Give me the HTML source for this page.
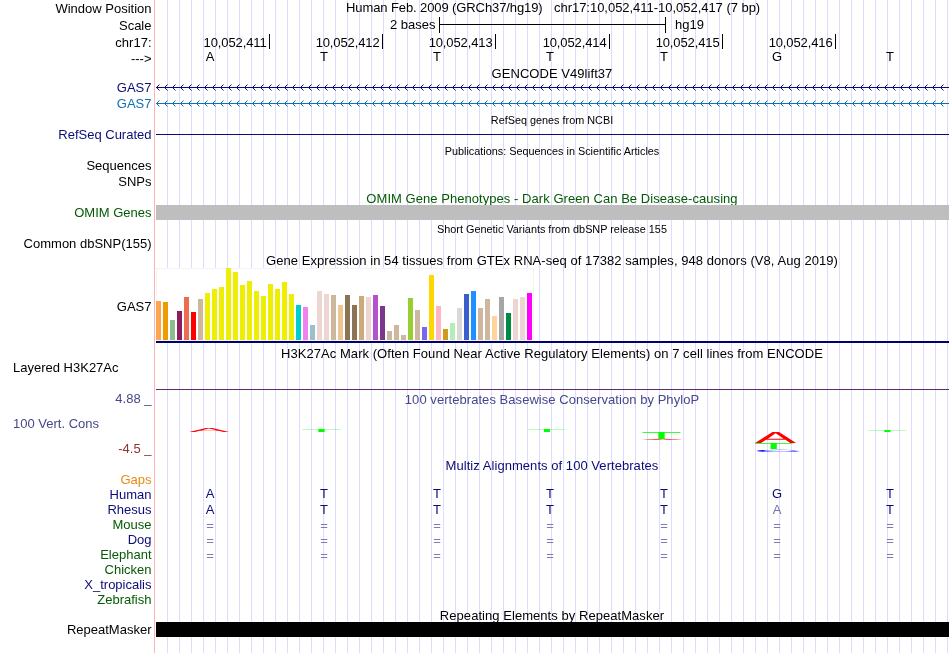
<!DOCTYPE html>
<html><head><meta charset="utf-8"><title>UCSC Genome Browser - chr17:10,052,411-10,052,417</title>
<style>
html,body{margin:0;padding:0;background:#fff}
body{width:950px;height:653px;position:relative;overflow:hidden;font-family:"Liberation Sans",sans-serif;font-size:13px;line-height:15px;color:#000;
background-image:repeating-linear-gradient(90deg,#dcdcff 0,#dcdcff 1px,transparent 1px,transparent 12px);background-position:167px 0;background-size:12px 100%}
.cover{position:absolute;left:0;top:0;width:156px;height:653px;background:#fff}
.sep{position:absolute;left:154px;top:0;width:1px;height:653px;background:#ffb4b4}
#w{position:absolute;left:0;top:0;width:950px;height:653px;will-change:transform}
.l,.t,.c,.b,.r,.g{position:absolute;white-space:nowrap;height:15px}
.l{left:0;width:151.5px;text-align:right}
.c{left:155px;width:794px;text-align:center;letter-spacing:0.05px}
.b{width:20px;text-align:center}
.r{height:auto}
.g{left:0;top:0;text-rendering:geometricPrecision;display:block;font-size:20px;line-height:20px;height:20px;transform-origin:0 0}
</style></head><body>
<div id="w"><div class="cover"></div><div class="sep"></div>
<div class="l" style="top:1px;color:#000">Window Position</div>
<div class="l" style="top:18px;color:#000">Scale</div>
<div class="l" style="top:35px;color:#000">chr17:</div>
<div class="l" style="top:51px;color:#000">---&gt;</div>
<div class="l" style="top:80px;color:#0c0c78">GAS7</div>
<div class="l" style="top:96px;color:#0f70b0">GAS7</div>
<div class="l" style="top:127px;color:#0c0c78">RefSeq Curated</div>
<div class="l" style="top:158px;color:#000">Sequences</div>
<div class="l" style="top:174px;color:#000">SNPs</div>
<div class="l" style="top:205px;color:#045a04">OMIM Genes</div>
<div class="l" style="top:236px;color:#000">Common dbSNP(155)</div>
<div class="l" style="top:299px;color:#000">GAS7</div>
<div class="l" style="top:472px;color:#e68c14">Gaps</div>
<div class="l" style="top:487px;color:#0c0c78">Human</div>
<div class="l" style="top:502px;color:#0c0c78">Rhesus</div>
<div class="l" style="top:517px;color:#045a04">Mouse</div>
<div class="l" style="top:532px;color:#0c0c78">Dog</div>
<div class="l" style="top:547px;color:#045a04">Elephant</div>
<div class="l" style="top:562px;color:#045a04">Chicken</div>
<div class="l" style="top:577px;color:#0c0c78">X_tropicalis</div>
<div class="l" style="top:592px;color:#045a04">Zebrafish</div>
<div class="l" style="top:622px;color:#000">RepeatMasker</div>
<div class="t" style="left:13px;top:360px">Layered H3K27Ac</div>
<div class="t" style="left:13px;top:416px;color:#46468c">100 Vert. Cons</div>
<div class="l" style="top:391px;color:#46468c">4.88 _</div>
<div class="l" style="top:441px;color:#8c3232">-4.5 _</div>
<div class="c" style="top:66px;color:#000;font-size:13px">GENCODE V49lift37</div>
<div class="c" style="top:113px;color:#000;font-size:10.85px;letter-spacing:0">RefSeq genes from NCBI</div>
<div class="c" style="top:144px;color:#000;font-size:10.85px;letter-spacing:0">Publications: Sequences in Scientific Articles</div>
<div class="c" style="top:191px;color:#045a04;font-size:13px">OMIM Gene Phenotypes - Dark Green Can Be Disease-causing</div>
<div class="c" style="top:222px;color:#000;font-size:10.85px;letter-spacing:0">Short Genetic Variants from dbSNP release 155</div>
<div class="c" style="top:253px;color:#000;font-size:13px">Gene Expression in 54 tissues from GTEx RNA-seq of 17382 samples, 948 donors (V8, Aug 2019)</div>
<div class="c" style="top:346px;color:#000;font-size:13px">H3K27Ac Mark (Often Found Near Active Regulatory Elements) on 7 cell lines from ENCODE</div>
<div class="c" style="top:392px;color:#46468c;font-size:13px">100 vertebrates Basewise Conservation by PhyloP</div>
<div class="c" style="top:458px;color:#0c0c78;font-size:13px">Multiz Alignments of 100 Vertebrates</div>
<div class="c" style="top:608px;color:#000;font-size:13px">Repeating Elements by RepeatMasker</div>
<div class="t" style="left:346px;top:0px;letter-spacing:-0.1px">Human Feb. 2009 (GRCh37/hg19)</div>
<div class="t" style="left:554px;top:0px;letter-spacing:-0.03px">chr17:10,052,411-10,052,417 (7 bp)</div>
<div class="t" style="left:390px;top:17px">2 bases</div>
<div class="t" style="left:675px;top:17px">hg19</div>
<div class="r" style="left:439px;top:24px;width:227px;height:1px;background:#000"></div>
<div class="r" style="left:439px;top:17px;width:1px;height:16px;background:#000"></div>
<div class="r" style="left:665px;top:17px;width:1px;height:16px;background:#000"></div>
<div class="r" style="left:269px;top:34px;width:1px;height:15px;background:#000"></div>
<div class="t" style="left:202.5px;width:64px;text-align:right;top:35px;letter-spacing:-0.12px">10,052,411</div>
<div class="r" style="left:382px;top:34px;width:1px;height:15px;background:#000"></div>
<div class="t" style="left:315.5px;width:64px;text-align:right;top:35px;letter-spacing:-0.12px">10,052,412</div>
<div class="r" style="left:495px;top:34px;width:1px;height:15px;background:#000"></div>
<div class="t" style="left:428.5px;width:64px;text-align:right;top:35px;letter-spacing:-0.12px">10,052,413</div>
<div class="r" style="left:609px;top:34px;width:1px;height:15px;background:#000"></div>
<div class="t" style="left:542.5px;width:64px;text-align:right;top:35px;letter-spacing:-0.12px">10,052,414</div>
<div class="r" style="left:722px;top:34px;width:1px;height:15px;background:#000"></div>
<div class="t" style="left:655.5px;width:64px;text-align:right;top:35px;letter-spacing:-0.12px">10,052,415</div>
<div class="r" style="left:835px;top:34px;width:1px;height:15px;background:#000"></div>
<div class="t" style="left:768.5px;width:64px;text-align:right;top:35px;letter-spacing:-0.12px">10,052,416</div>
<div class="b" style="left:200px;top:49px">A</div>
<div class="b" style="left:314px;top:49px">T</div>
<div class="b" style="left:427px;top:49px">T</div>
<div class="b" style="left:540px;top:49px">T</div>
<div class="b" style="left:654px;top:49px">T</div>
<div class="b" style="left:767px;top:49px">G</div>
<div class="b" style="left:880px;top:49px">T</div>
<div class="b" style="left:200px;top:486px;color:#0c0c78">A</div>
<div class="b" style="left:314px;top:486px;color:#0c0c78">T</div>
<div class="b" style="left:427px;top:486px;color:#0c0c78">T</div>
<div class="b" style="left:540px;top:486px;color:#0c0c78">T</div>
<div class="b" style="left:654px;top:486px;color:#0c0c78">T</div>
<div class="b" style="left:767px;top:486px;color:#0c0c78">G</div>
<div class="b" style="left:880px;top:486px;color:#0c0c78">T</div>
<div class="b" style="left:200px;top:502px;color:#0c0c78">A</div>
<div class="b" style="left:314px;top:502px;color:#0c0c78">T</div>
<div class="b" style="left:427px;top:502px;color:#0c0c78">T</div>
<div class="b" style="left:540px;top:502px;color:#0c0c78">T</div>
<div class="b" style="left:654px;top:502px;color:#0c0c78">T</div>
<div class="b" style="left:767px;top:502px;color:#7474ac">A</div>
<div class="b" style="left:880px;top:502px;color:#0c0c78">T</div>
<div class="b" style="left:200px;top:518px;color:#7c7cb4">=</div>
<div class="b" style="left:314px;top:518px;color:#7c7cb4">=</div>
<div class="b" style="left:427px;top:518px;color:#7c7cb4">=</div>
<div class="b" style="left:540px;top:518px;color:#7c7cb4">=</div>
<div class="b" style="left:654px;top:518px;color:#7c7cb4">=</div>
<div class="b" style="left:767px;top:518px;color:#7c7cb4">=</div>
<div class="b" style="left:880px;top:518px;color:#7c7cb4">=</div>
<div class="b" style="left:200px;top:533px;color:#7c7cb4">=</div>
<div class="b" style="left:314px;top:533px;color:#7c7cb4">=</div>
<div class="b" style="left:427px;top:533px;color:#7c7cb4">=</div>
<div class="b" style="left:540px;top:533px;color:#7c7cb4">=</div>
<div class="b" style="left:654px;top:533px;color:#7c7cb4">=</div>
<div class="b" style="left:767px;top:533px;color:#7c7cb4">=</div>
<div class="b" style="left:880px;top:533px;color:#7c7cb4">=</div>
<div class="b" style="left:200px;top:548px;color:#7c7cb4">=</div>
<div class="b" style="left:314px;top:548px;color:#7c7cb4">=</div>
<div class="b" style="left:427px;top:548px;color:#7c7cb4">=</div>
<div class="b" style="left:540px;top:548px;color:#7c7cb4">=</div>
<div class="b" style="left:654px;top:548px;color:#7c7cb4">=</div>
<div class="b" style="left:767px;top:548px;color:#7c7cb4">=</div>
<div class="b" style="left:880px;top:548px;color:#7c7cb4">=</div>
<svg class="r" style="left:156px;top:83px" width="794" height="9" viewBox="0 0 794 9"><path d="M0 4.5H793" stroke="#0c0c78" stroke-width="1" fill="none"/><path d="M3.5 1.5L0.5 4.5L3.5 7.5M11.5 1.5L8.5 4.5L11.5 7.5M19.5 1.5L16.5 4.5L19.5 7.5M27.5 1.5L24.5 4.5L27.5 7.5M35.5 1.5L32.5 4.5L35.5 7.5M43.5 1.5L40.5 4.5L43.5 7.5M51.5 1.5L48.5 4.5L51.5 7.5M59.5 1.5L56.5 4.5L59.5 7.5M67.5 1.5L64.5 4.5L67.5 7.5M75.5 1.5L72.5 4.5L75.5 7.5M83.5 1.5L80.5 4.5L83.5 7.5M91.5 1.5L88.5 4.5L91.5 7.5M99.5 1.5L96.5 4.5L99.5 7.5M107.5 1.5L104.5 4.5L107.5 7.5M115.5 1.5L112.5 4.5L115.5 7.5M123.5 1.5L120.5 4.5L123.5 7.5M131.5 1.5L128.5 4.5L131.5 7.5M139.5 1.5L136.5 4.5L139.5 7.5M147.5 1.5L144.5 4.5L147.5 7.5M155.5 1.5L152.5 4.5L155.5 7.5M163.5 1.5L160.5 4.5L163.5 7.5M171.5 1.5L168.5 4.5L171.5 7.5M179.5 1.5L176.5 4.5L179.5 7.5M187.5 1.5L184.5 4.5L187.5 7.5M195.5 1.5L192.5 4.5L195.5 7.5M203.5 1.5L200.5 4.5L203.5 7.5M211.5 1.5L208.5 4.5L211.5 7.5M219.5 1.5L216.5 4.5L219.5 7.5M227.5 1.5L224.5 4.5L227.5 7.5M235.5 1.5L232.5 4.5L235.5 7.5M243.5 1.5L240.5 4.5L243.5 7.5M251.5 1.5L248.5 4.5L251.5 7.5M259.5 1.5L256.5 4.5L259.5 7.5M267.5 1.5L264.5 4.5L267.5 7.5M275.5 1.5L272.5 4.5L275.5 7.5M283.5 1.5L280.5 4.5L283.5 7.5M291.5 1.5L288.5 4.5L291.5 7.5M299.5 1.5L296.5 4.5L299.5 7.5M307.5 1.5L304.5 4.5L307.5 7.5M315.5 1.5L312.5 4.5L315.5 7.5M323.5 1.5L320.5 4.5L323.5 7.5M331.5 1.5L328.5 4.5L331.5 7.5M339.5 1.5L336.5 4.5L339.5 7.5M347.5 1.5L344.5 4.5L347.5 7.5M355.5 1.5L352.5 4.5L355.5 7.5M363.5 1.5L360.5 4.5L363.5 7.5M371.5 1.5L368.5 4.5L371.5 7.5M379.5 1.5L376.5 4.5L379.5 7.5M387.5 1.5L384.5 4.5L387.5 7.5M395.5 1.5L392.5 4.5L395.5 7.5M403.5 1.5L400.5 4.5L403.5 7.5M411.5 1.5L408.5 4.5L411.5 7.5M419.5 1.5L416.5 4.5L419.5 7.5M427.5 1.5L424.5 4.5L427.5 7.5M435.5 1.5L432.5 4.5L435.5 7.5M443.5 1.5L440.5 4.5L443.5 7.5M451.5 1.5L448.5 4.5L451.5 7.5M459.5 1.5L456.5 4.5L459.5 7.5M467.5 1.5L464.5 4.5L467.5 7.5M475.5 1.5L472.5 4.5L475.5 7.5M483.5 1.5L480.5 4.5L483.5 7.5M491.5 1.5L488.5 4.5L491.5 7.5M499.5 1.5L496.5 4.5L499.5 7.5M507.5 1.5L504.5 4.5L507.5 7.5M515.5 1.5L512.5 4.5L515.5 7.5M523.5 1.5L520.5 4.5L523.5 7.5M531.5 1.5L528.5 4.5L531.5 7.5M539.5 1.5L536.5 4.5L539.5 7.5M547.5 1.5L544.5 4.5L547.5 7.5M555.5 1.5L552.5 4.5L555.5 7.5M563.5 1.5L560.5 4.5L563.5 7.5M571.5 1.5L568.5 4.5L571.5 7.5M579.5 1.5L576.5 4.5L579.5 7.5M587.5 1.5L584.5 4.5L587.5 7.5M595.5 1.5L592.5 4.5L595.5 7.5M603.5 1.5L600.5 4.5L603.5 7.5M611.5 1.5L608.5 4.5L611.5 7.5M619.5 1.5L616.5 4.5L619.5 7.5M627.5 1.5L624.5 4.5L627.5 7.5M635.5 1.5L632.5 4.5L635.5 7.5M643.5 1.5L640.5 4.5L643.5 7.5M651.5 1.5L648.5 4.5L651.5 7.5M659.5 1.5L656.5 4.5L659.5 7.5M667.5 1.5L664.5 4.5L667.5 7.5M675.5 1.5L672.5 4.5L675.5 7.5M683.5 1.5L680.5 4.5L683.5 7.5M691.5 1.5L688.5 4.5L691.5 7.5M699.5 1.5L696.5 4.5L699.5 7.5M707.5 1.5L704.5 4.5L707.5 7.5M715.5 1.5L712.5 4.5L715.5 7.5M723.5 1.5L720.5 4.5L723.5 7.5M731.5 1.5L728.5 4.5L731.5 7.5M739.5 1.5L736.5 4.5L739.5 7.5M747.5 1.5L744.5 4.5L747.5 7.5M755.5 1.5L752.5 4.5L755.5 7.5M763.5 1.5L760.5 4.5L763.5 7.5M771.5 1.5L768.5 4.5L771.5 7.5M779.5 1.5L776.5 4.5L779.5 7.5M787.5 1.5L784.5 4.5L787.5 7.5" stroke="#0c0c78" stroke-width="1" fill="none"/></svg>
<svg class="r" style="left:156px;top:99px" width="794" height="9" viewBox="0 0 794 9"><path d="M0 4.5H793" stroke="#0f70b0" stroke-width="1" fill="none"/><path d="M3.5 1.5L0.5 4.5L3.5 7.5M11.5 1.5L8.5 4.5L11.5 7.5M19.5 1.5L16.5 4.5L19.5 7.5M27.5 1.5L24.5 4.5L27.5 7.5M35.5 1.5L32.5 4.5L35.5 7.5M43.5 1.5L40.5 4.5L43.5 7.5M51.5 1.5L48.5 4.5L51.5 7.5M59.5 1.5L56.5 4.5L59.5 7.5M67.5 1.5L64.5 4.5L67.5 7.5M75.5 1.5L72.5 4.5L75.5 7.5M83.5 1.5L80.5 4.5L83.5 7.5M91.5 1.5L88.5 4.5L91.5 7.5M99.5 1.5L96.5 4.5L99.5 7.5M107.5 1.5L104.5 4.5L107.5 7.5M115.5 1.5L112.5 4.5L115.5 7.5M123.5 1.5L120.5 4.5L123.5 7.5M131.5 1.5L128.5 4.5L131.5 7.5M139.5 1.5L136.5 4.5L139.5 7.5M147.5 1.5L144.5 4.5L147.5 7.5M155.5 1.5L152.5 4.5L155.5 7.5M163.5 1.5L160.5 4.5L163.5 7.5M171.5 1.5L168.5 4.5L171.5 7.5M179.5 1.5L176.5 4.5L179.5 7.5M187.5 1.5L184.5 4.5L187.5 7.5M195.5 1.5L192.5 4.5L195.5 7.5M203.5 1.5L200.5 4.5L203.5 7.5M211.5 1.5L208.5 4.5L211.5 7.5M219.5 1.5L216.5 4.5L219.5 7.5M227.5 1.5L224.5 4.5L227.5 7.5M235.5 1.5L232.5 4.5L235.5 7.5M243.5 1.5L240.5 4.5L243.5 7.5M251.5 1.5L248.5 4.5L251.5 7.5M259.5 1.5L256.5 4.5L259.5 7.5M267.5 1.5L264.5 4.5L267.5 7.5M275.5 1.5L272.5 4.5L275.5 7.5M283.5 1.5L280.5 4.5L283.5 7.5M291.5 1.5L288.5 4.5L291.5 7.5M299.5 1.5L296.5 4.5L299.5 7.5M307.5 1.5L304.5 4.5L307.5 7.5M315.5 1.5L312.5 4.5L315.5 7.5M323.5 1.5L320.5 4.5L323.5 7.5M331.5 1.5L328.5 4.5L331.5 7.5M339.5 1.5L336.5 4.5L339.5 7.5M347.5 1.5L344.5 4.5L347.5 7.5M355.5 1.5L352.5 4.5L355.5 7.5M363.5 1.5L360.5 4.5L363.5 7.5M371.5 1.5L368.5 4.5L371.5 7.5M379.5 1.5L376.5 4.5L379.5 7.5M387.5 1.5L384.5 4.5L387.5 7.5M395.5 1.5L392.5 4.5L395.5 7.5M403.5 1.5L400.5 4.5L403.5 7.5M411.5 1.5L408.5 4.5L411.5 7.5M419.5 1.5L416.5 4.5L419.5 7.5M427.5 1.5L424.5 4.5L427.5 7.5M435.5 1.5L432.5 4.5L435.5 7.5M443.5 1.5L440.5 4.5L443.5 7.5M451.5 1.5L448.5 4.5L451.5 7.5M459.5 1.5L456.5 4.5L459.5 7.5M467.5 1.5L464.5 4.5L467.5 7.5M475.5 1.5L472.5 4.5L475.5 7.5M483.5 1.5L480.5 4.5L483.5 7.5M491.5 1.5L488.5 4.5L491.5 7.5M499.5 1.5L496.5 4.5L499.5 7.5M507.5 1.5L504.5 4.5L507.5 7.5M515.5 1.5L512.5 4.5L515.5 7.5M523.5 1.5L520.5 4.5L523.5 7.5M531.5 1.5L528.5 4.5L531.5 7.5M539.5 1.5L536.5 4.5L539.5 7.5M547.5 1.5L544.5 4.5L547.5 7.5M555.5 1.5L552.5 4.5L555.5 7.5M563.5 1.5L560.5 4.5L563.5 7.5M571.5 1.5L568.5 4.5L571.5 7.5M579.5 1.5L576.5 4.5L579.5 7.5M587.5 1.5L584.5 4.5L587.5 7.5M595.5 1.5L592.5 4.5L595.5 7.5M603.5 1.5L600.5 4.5L603.5 7.5M611.5 1.5L608.5 4.5L611.5 7.5M619.5 1.5L616.5 4.5L619.5 7.5M627.5 1.5L624.5 4.5L627.5 7.5M635.5 1.5L632.5 4.5L635.5 7.5M643.5 1.5L640.5 4.5L643.5 7.5M651.5 1.5L648.5 4.5L651.5 7.5M659.5 1.5L656.5 4.5L659.5 7.5M667.5 1.5L664.5 4.5L667.5 7.5M675.5 1.5L672.5 4.5L675.5 7.5M683.5 1.5L680.5 4.5L683.5 7.5M691.5 1.5L688.5 4.5L691.5 7.5M699.5 1.5L696.5 4.5L699.5 7.5M707.5 1.5L704.5 4.5L707.5 7.5M715.5 1.5L712.5 4.5L715.5 7.5M723.5 1.5L720.5 4.5L723.5 7.5M731.5 1.5L728.5 4.5L731.5 7.5M739.5 1.5L736.5 4.5L739.5 7.5M747.5 1.5L744.5 4.5L747.5 7.5M755.5 1.5L752.5 4.5L755.5 7.5M763.5 1.5L760.5 4.5L763.5 7.5M771.5 1.5L768.5 4.5L771.5 7.5M779.5 1.5L776.5 4.5L779.5 7.5M787.5 1.5L784.5 4.5L787.5 7.5" stroke="#0f70b0" stroke-width="1" fill="none"/></svg>
<div class="r" style="left:156px;top:134px;width:793px;height:1px;background:#0c0c78"></div>
<div class="r" style="left:156px;top:205px;width:793px;height:15px;background:#bebebe"></div>
<div class="r" style="left:156px;top:268px;width:378px;height:73px;background:#fff;border:1px solid #f3f3f3;box-sizing:border-box"></div>
<div class="r" style="left:156px;top:301px;width:5px;height:39px;background:#FFA54F"></div>
<div class="r" style="left:163px;top:302px;width:5px;height:38px;background:#EE9A00"></div>
<div class="r" style="left:170px;top:320px;width:5px;height:20px;background:#8FBC8F"></div>
<div class="r" style="left:177px;top:311px;width:5px;height:29px;background:#8B1C62"></div>
<div class="r" style="left:184px;top:297px;width:5px;height:43px;background:#EE6A50"></div>
<div class="r" style="left:191px;top:312px;width:5px;height:28px;background:#FF0000"></div>
<div class="r" style="left:198px;top:299px;width:5px;height:41px;background:#CDB79E"></div>
<div class="r" style="left:205px;top:293px;width:5px;height:47px;background:#EEEE00"></div>
<div class="r" style="left:212px;top:289px;width:5px;height:51px;background:#EEEE00"></div>
<div class="r" style="left:219px;top:287px;width:5px;height:53px;background:#EEEE00"></div>
<div class="r" style="left:226px;top:268px;width:5px;height:72px;background:#EEEE00"></div>
<div class="r" style="left:233px;top:272px;width:5px;height:68px;background:#EEEE00"></div>
<div class="r" style="left:240px;top:285px;width:5px;height:55px;background:#EEEE00"></div>
<div class="r" style="left:247px;top:281px;width:5px;height:59px;background:#EEEE00"></div>
<div class="r" style="left:254px;top:291px;width:5px;height:49px;background:#EEEE00"></div>
<div class="r" style="left:261px;top:296px;width:5px;height:44px;background:#EEEE00"></div>
<div class="r" style="left:268px;top:284px;width:5px;height:56px;background:#EEEE00"></div>
<div class="r" style="left:275px;top:289px;width:5px;height:51px;background:#EEEE00"></div>
<div class="r" style="left:282px;top:282px;width:5px;height:58px;background:#EEEE00"></div>
<div class="r" style="left:289px;top:294px;width:5px;height:46px;background:#EEEE00"></div>
<div class="r" style="left:296px;top:305px;width:5px;height:35px;background:#00CDCD"></div>
<div class="r" style="left:303px;top:307px;width:5px;height:33px;background:#EE82EE"></div>
<div class="r" style="left:310px;top:325px;width:5px;height:15px;background:#9AC0CD"></div>
<div class="r" style="left:317px;top:291px;width:5px;height:49px;background:#EED5D2"></div>
<div class="r" style="left:324px;top:294px;width:5px;height:46px;background:#EED5D2"></div>
<div class="r" style="left:331px;top:295px;width:5px;height:45px;background:#CDB79E"></div>
<div class="r" style="left:338px;top:305px;width:5px;height:35px;background:#EEC591"></div>
<div class="r" style="left:345px;top:295px;width:5px;height:45px;background:#8B7355"></div>
<div class="r" style="left:352px;top:305px;width:5px;height:35px;background:#8B7355"></div>
<div class="r" style="left:359px;top:296px;width:5px;height:44px;background:#CDAA7D"></div>
<div class="r" style="left:366px;top:297px;width:5px;height:43px;background:#EED5D2"></div>
<div class="r" style="left:373px;top:295px;width:5px;height:45px;background:#B452CD"></div>
<div class="r" style="left:380px;top:306px;width:5px;height:34px;background:#7A378B"></div>
<div class="r" style="left:387px;top:331px;width:5px;height:9px;background:#CDB79E"></div>
<div class="r" style="left:394px;top:325px;width:5px;height:15px;background:#CDB79E"></div>
<div class="r" style="left:401px;top:335px;width:5px;height:5px;background:#CDB79E"></div>
<div class="r" style="left:408px;top:298px;width:5px;height:42px;background:#9ACD32"></div>
<div class="r" style="left:415px;top:310px;width:5px;height:30px;background:#CDB79E"></div>
<div class="r" style="left:422px;top:327px;width:5px;height:13px;background:#7A67EE"></div>
<div class="r" style="left:429px;top:275px;width:5px;height:65px;background:#FFD700"></div>
<div class="r" style="left:436px;top:306px;width:5px;height:34px;background:#FFB6C1"></div>
<div class="r" style="left:443px;top:329px;width:5px;height:11px;background:#CD9B1D"></div>
<div class="r" style="left:450px;top:323px;width:5px;height:17px;background:#B4EEB4"></div>
<div class="r" style="left:457px;top:308px;width:5px;height:32px;background:#D9D9D9"></div>
<div class="r" style="left:464px;top:294px;width:5px;height:46px;background:#3A5FCD"></div>
<div class="r" style="left:471px;top:291px;width:5px;height:49px;background:#1E90FF"></div>
<div class="r" style="left:478px;top:308px;width:5px;height:32px;background:#CDB79E"></div>
<div class="r" style="left:485px;top:299px;width:5px;height:41px;background:#CDB79E"></div>
<div class="r" style="left:492px;top:316px;width:5px;height:24px;background:#FFD39B"></div>
<div class="r" style="left:499px;top:297px;width:5px;height:43px;background:#A6A6A6"></div>
<div class="r" style="left:506px;top:313px;width:5px;height:27px;background:#008B45"></div>
<div class="r" style="left:513px;top:299px;width:5px;height:41px;background:#EED5D2"></div>
<div class="r" style="left:520px;top:297px;width:5px;height:43px;background:#EED5D2"></div>
<div class="r" style="left:527px;top:293px;width:5px;height:47px;background:#FF00FF"></div>
<div class="r" style="left:156px;top:341px;width:793px;height:2px;background:#00006e"></div>
<div class="r" style="left:156px;top:389px;width:793px;height:1px;background:#5a2d64"></div>
<div class="r" style="left:156px;top:622px;width:793px;height:15px;background:#000"></div>
<span class="g" style="color:#ff0000;transform:matrix(3.0162,0,0,0.2907,188.88,427.37)">A</span>
<span class="g" style="color:#00ff00;transform:matrix(3.3603,0,0,0.2180,300.99,428.53)">T</span>
<span class="g" style="color:#00ff00;transform:matrix(3.2718,0,0,0.2180,527.03,428.53)">T</span>
<span class="g" style="color:#ff0000;transform:matrix(3.0464,0,0,0.0872,641.88,438.82)">A</span>
<span class="g" style="color:#00ff00;transform:matrix(3.3603,0,0,0.5087,640.89,430.88)">T</span>
<span class="g" style="color:#ff0000;transform:matrix(3.0916,0,0,0.7994,754.88,430.23)">A</span>
<span class="g" style="color:#00ff00;transform:matrix(3.3161,0,0,0.4361,753.51,442.04)">T</span>
<span class="g" style="color:#0000ff;transform:matrix(3.4186,0,0,0.1624,753.53,448.92)">C</span>
<span class="g" style="color:#00ff00;transform:matrix(3.3603,0,0,0.1454,866.99,429.69)">T</span>
</div></body></html>
